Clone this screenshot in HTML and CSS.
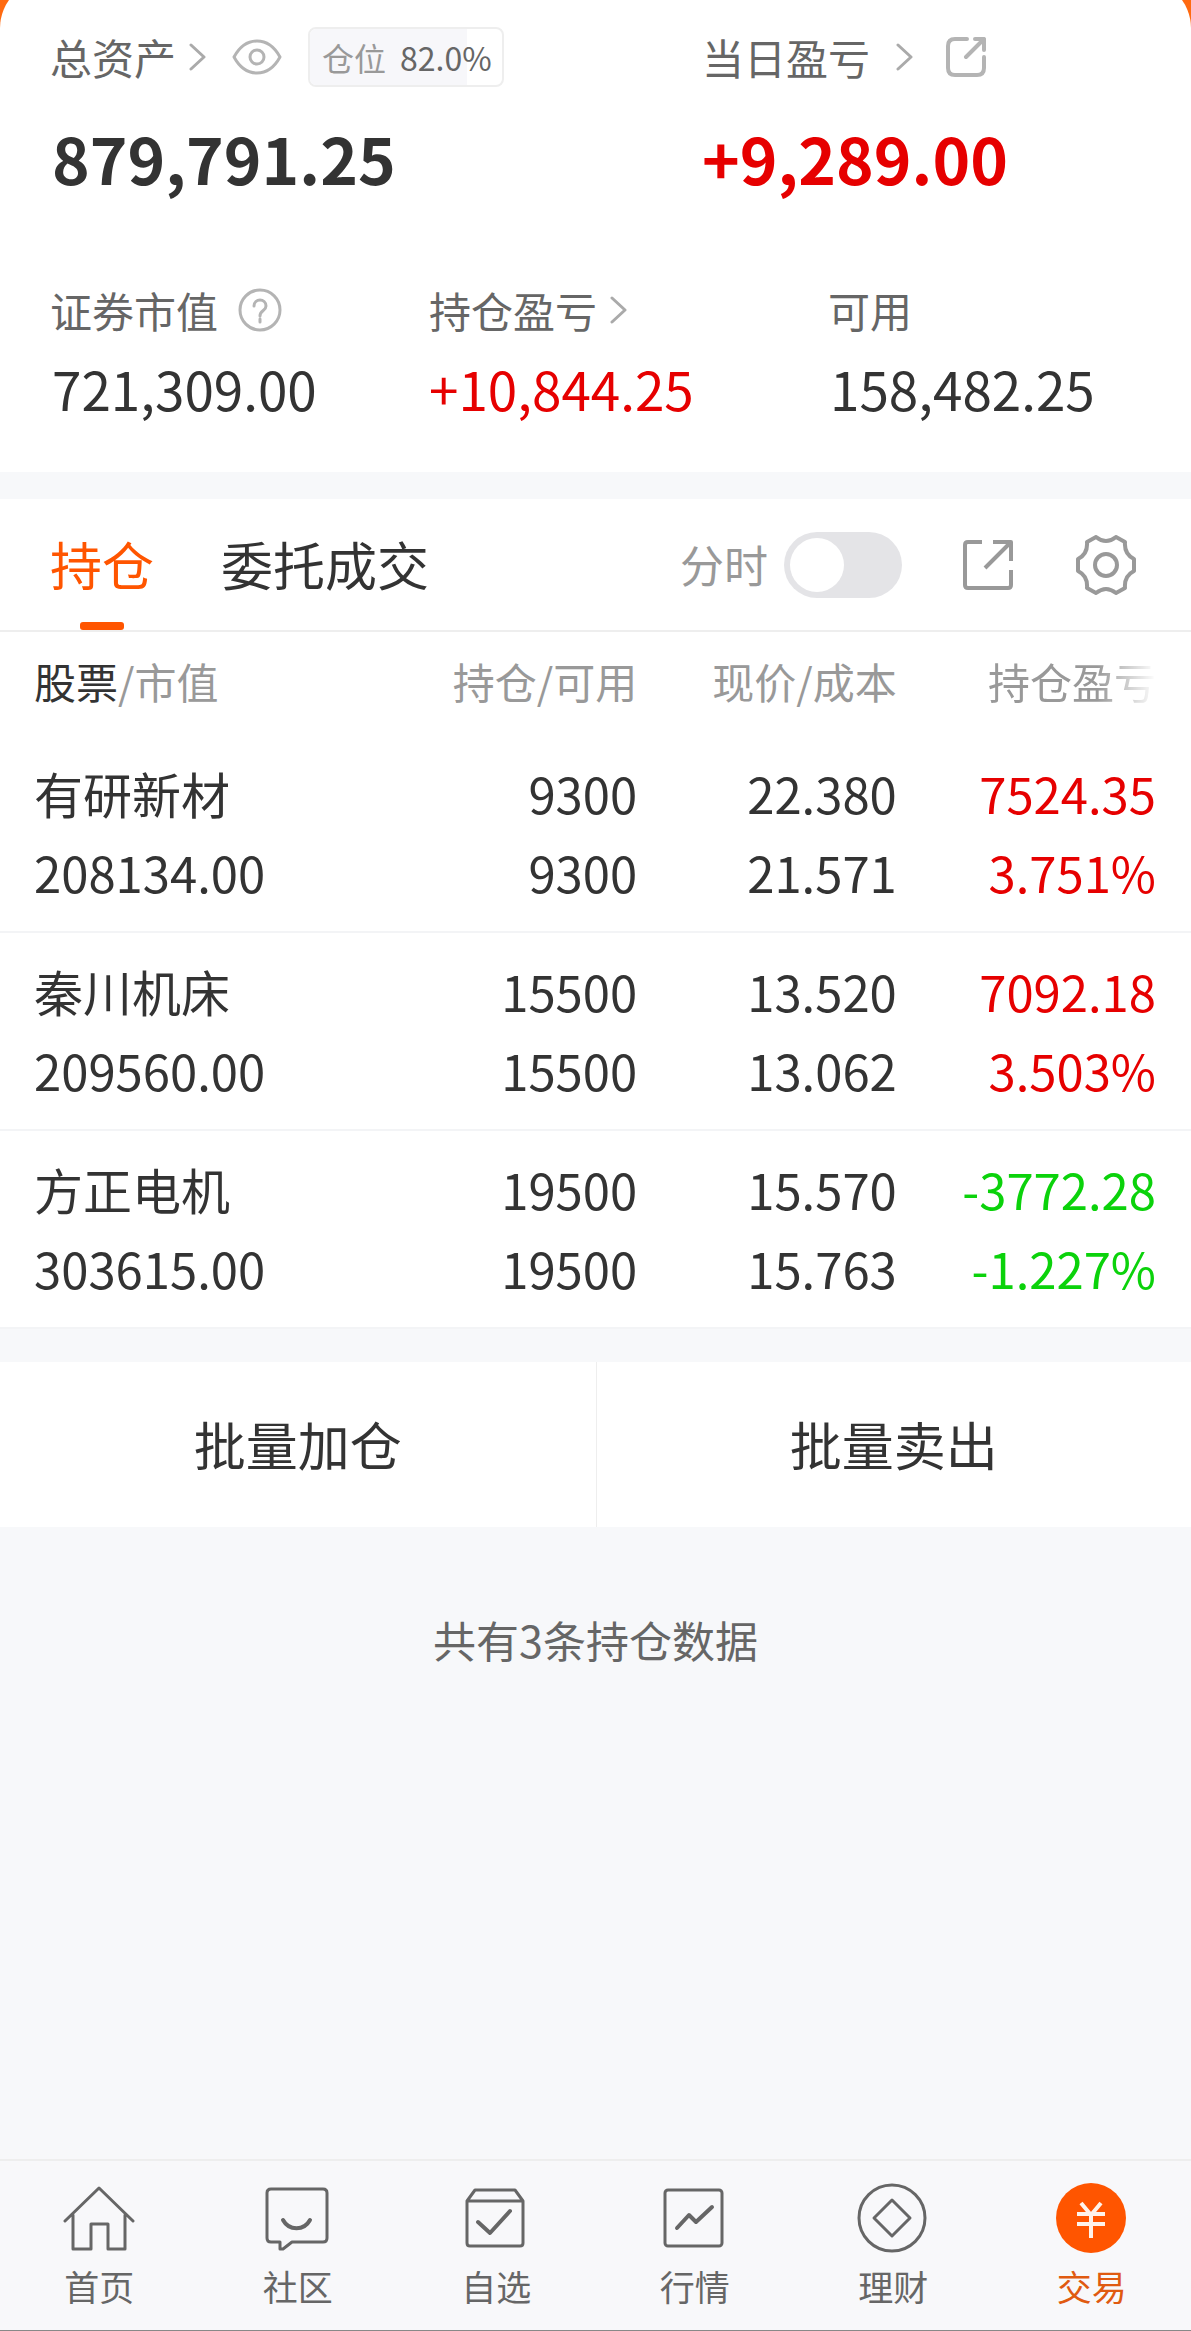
FILE: index.html
```html
<!DOCTYPE html>
<html lang="zh-CN">
<head>
  <meta charset="UTF-8" />
  <meta name="viewport" content="width=device-width, initial-scale=1.0" />
  <title>交易</title>
  <link rel="stylesheet" href="styles.css">
</head>
<body>
  <svg class="sprite" aria-hidden="true">
    <symbol id="chevron" viewBox="0 0 18 30"><path d="M2 3l13 12L2 27" /></symbol>
  </svg>

  <header class="top">
    <section class="summary">
      <div class="summary-main">
        <div>
          <div class="label-row">
            <a href="#" class="label">总资产<svg class="chevron near"><use href="#chevron" /></svg></a>
            <button class="icon-btn eye" aria-label="隐藏金额">
              <svg width="50" height="36" viewBox="0 0 50 36">
                <path d="M2 18C8 7 16 2 25 2s17 5 23 16C42 29 34 34 25 34S8 29 2 18z" />
                <circle cx="25" cy="18" r="7" />
              </svg>
            </button>
            <span class="position"><span class="position-fill" style="width: 82%"></span><span class="position-name">仓位</span><span class="position-value">82.0%</span></span>
          </div>
          <div class="amount">879,791.25</div>
        </div>
        <div>
          <div class="label-row">
            <a href="#" class="label">当日盈亏<svg class="chevron far"><use href="#chevron" /></svg></a>
            <button class="icon-btn share-small" aria-label="分享当日盈亏">
              <svg width="40" height="40" viewBox="0 0 40 40">
                <path d="M21 2H9Q2 2 2 9v22q0 7 7 7h22q7 0 7-7V20M29 2h9v11M38 2L20 20" />
              </svg>
            </button>
          </div>
          <div class="amount up">+9,289.00</div>
        </div>
      </div>
      <div class="summary-sub">
        <div>
          <div class="label-row short">
            <span class="label">证券市值</span>
            <button class="icon-btn help" aria-label="证券市值说明">
              <svg width="44" height="44" viewBox="0 0 44 44">
                <circle cx="22" cy="22" r="20" />
                <path d="M16 18c0-8 12-8 12 0 0 5-6 4-6 10M22 31v3" />
              </svg>
            </button>
          </div>
          <div class="value">721,309.00</div>
        </div>
        <div>
          <div class="label-row short">
            <a href="#" class="label">持仓盈亏<svg class="chevron near"><use href="#chevron" /></svg></a>
          </div>
          <div class="value up">+10,844.25</div>
        </div>
        <div>
          <div class="label-row short"><span class="label">可用</span></div>
          <div class="value">158,482.25</div>
        </div>
      </div>
    </section>
  </header>

  <main>
    <div class="toolbar">
      <button class="tab active">持仓</button>
      <button class="tab">委托成交</button>
      <label class="switch-label" for="minute">分时</label>
      <input type="checkbox" role="switch" class="switch" id="minute" />
      <button class="icon-btn share" aria-label="分享持仓">
        <svg width="52" height="52" viewBox="0 0 52 52">
          <path d="M20 3H6Q3 3 3 6v40q0 3 3 3h40q3 0 3-3V31M31 3h18v19M49 3L23 29" />
        </svg>
      </button>
      <button class="icon-btn" aria-label="设置">
        <svg width="60" height="60" viewBox="0 0 60 60">
          <path d="M20 2Q30 10 40 2l9 5Q48 19 58 24v12q-10 5-9 17l-9 5q-10-8-20 0l-9-5Q12 41 2 36V24Q12 19 11 7z" />
          <circle cx="30" cy="30" r="11" />
        </svg>
      </button>
    </div>

    <table class="holdings">
      <thead>
        <tr>
          <th class="col-name"><b>股票</b>/市值</th>
          <th class="col-amount">持仓/可用</th>
          <th class="col-price">现价/成本</th>
          <th class="col-profit"><span class="fade">持仓盈亏</span></th>
        </tr>
      </thead>
      <tbody>
        <tr>
          <td>有研新材<br>208134.00</td>
          <td>9300<br>9300</td>
          <td>22.380<br>21.571</td>
          <td class="up">7524.35<br>3.751%</td>
        </tr>
        <tr>
          <td>秦川机床<br>209560.00</td>
          <td>15500<br>15500</td>
          <td>13.520<br>13.062</td>
          <td class="up">7092.18<br>3.503%</td>
        </tr>
        <tr>
          <td>方正电机<br>303615.00</td>
          <td>19500<br>19500</td>
          <td>15.570<br>15.763</td>
          <td class="down">-3772.28<br>-1.227%</td>
        </tr>
      </tbody>
    </table>

    <div class="batch">
      <button>批量加仓</button>
      <button>批量卖出</button>
    </div>

    <p class="count">共有3条持仓数据</p>
  </main>

  <nav class="tabbar">
    <a href="#">
      <svg width="72" height="72" viewBox="0 0 72 72"><path d="M2 39L36 6l34 33M10 33v34h18V42h17v25h17V33" /></svg>
      首页
    </a>
    <a href="#">
      <svg width="72" height="72" viewBox="0 0 72 72">
        <path d="M9 7h52q4 0 4 4v45q0 4-4 4H30l-9 7h-3v-7H9q-4 0-4-4V11q0-4 4-4z" />
        <path class="thick" d="M21 38c6 11 21 11 27 0" />
      </svg>
      社区
    </a>
    <a href="#">
      <svg width="72" height="72" viewBox="0 0 72 72">
        <path d="M7 19v42q0 3 3 3h50q3 0 3-3V19L55 8H15zM7 19h56" />
        <path class="thick" d="M18 40l12 11 20-22" />
      </svg>
      自选
    </a>
    <a href="#">
      <svg width="72" height="72" viewBox="0 0 72 72">
        <rect x="6" y="8" width="57" height="56" rx="3" />
        <path class="thick" d="M18 46l12-13 7 7 16-15" />
      </svg>
      行情
    </a>
    <a href="#">
      <svg width="72" height="72" viewBox="0 0 72 72">
        <circle cx="35" cy="36" r="33" />
        <path d="M35 18l18 18-18 18-18-18z" />
      </svg>
      理财
    </a>
    <a href="#" class="current">
      <svg width="72" height="72" viewBox="0 0 72 72">
        <circle cx="35" cy="36" r="35" />
        <path d="M25 21l10 12 10-12M35 32v24M21 32h28M21 42h28" />
      </svg>
      交易
    </a>
  </nav>
</body>
</html>
```

FILE: styles.css
```css
* {
  box-sizing: border-box;
}
body {
  margin: 0;
  min-height: 100vh;
  display: flex;
  flex-direction: column;
  font-family: "Noto Sans CJK SC", sans-serif;
  color: #333;
  background: #f7f8fa;
  border-bottom: 1px solid #888;
}
a {
  color: inherit;
  text-decoration: none;
}
button {
  padding: 0;
  border: 0;
  background: none;
  font: inherit;
  color: inherit;
}
svg {
  display: block;
  fill: none;
  stroke: currentColor;
  stroke-linecap: round;
  stroke-linejoin: round;
}
.sprite {
  display: none;
}
.up {
  color: #e60000;
}
.down {
  color: #0bd20b;
}

/* account summary */
.top {
  overflow: hidden;
  background: #ff6a10;
}
.summary {
  margin-top: -20px;
  padding: 47px 50px 52px;
  border-radius: 48px 48px 0 0;
  background: #fff;
}
.summary-main,
.summary-sub {
  display: grid;
}
.summary-main {
  grid-template-columns: 652fr 439fr;
  margin-bottom: 88px;
}
.summary-sub {
  grid-template-columns: 379fr 399fr 313fr;
}
.label-row {
  display: flex;
  align-items: center;
  height: 60px;
}
.label-row.short {
  height: 50px;
}
.label {
  display: flex;
  align-items: center;
  font-size: 42px;
  line-height: 50px;
  color: #666;
}
.chevron {
  width: 18px;
  height: 30px;
  stroke-width: 3;
  color: #aaa;
}
.near {
  margin-left: 13px;
}
.far {
  margin-left: 26px;
}
.icon-btn {
  flex: none;
  color: #999;
}
.icon-btn svg {
  stroke-width: 4;
}
.eye,
.share-small,
.help {
  color: #b4b4b4;
}
.eye {
  margin-left: 25px;
}
.eye svg,
.help svg {
  stroke-width: 3;
}
.share-small {
  margin-left: 32px;
}
.help {
  margin-left: 20px;
}
.position {
  position: relative;
  display: flex;
  align-items: center;
  gap: 14px;
  height: 60px;
  margin-left: 26px;
  padding: 0 10px 0 12px;
  border: 2px solid #eee;
  border-radius: 8px;
  font-size: 32px;
  line-height: 40px;
  overflow: hidden;
}
.position-fill {
  position: absolute;
  top: 0;
  bottom: 0;
  left: 0;
  background: #f7f7fa;
}
.position-name,
.position-value {
  position: relative;
  color: #999;
}
.position-value {
  color: #666;
}
.amount {
  margin-top: 30px;
  padding-left: 2px;
  font-size: 64px;
  font-weight: 700;
  line-height: 80px;
}
.amount.up,
.value.up {
  padding-left: 0;
}
.value {
  margin-top: 21px;
  padding-left: 2px;
  font-size: 53px;
  line-height: 64px;
}

/* tabs and tools */
main {
  flex: 1;
}
.toolbar {
  display: flex;
  align-items: center;
  height: 133px;
  margin-top: 27px;
  padding: 0 55px 0 50px;
  border-bottom: 2px solid #eee;
  background: #fff;
}
.tab {
  position: relative;
  height: 131px;
  margin-right: 67px;
  padding-bottom: 3px;
  font-size: 52px;
}
.tab.active {
  color: #ff5500;
}
.tab.active::after {
  content: "";
  position: absolute;
  bottom: 0;
  left: 50%;
  width: 44px;
  height: 8px;
  margin-left: -22px;
  border-radius: 3px;
  background: #ff5500;
}
.switch-label {
  margin-left: auto;
  padding-bottom: 2px;
  font-size: 44px;
  line-height: 60px;
  color: #999;
}
.switch {
  appearance: none;
  width: 118px;
  height: 66px;
  margin: 0 60px 0 16px;
  padding: 6px;
  border-radius: 33px;
  background: #e4e4e7;
}
.switch::before {
  content: "";
  display: block;
  width: 54px;
  height: 54px;
  border-radius: 50%;
  background: #fff;
}
.switch:checked {
  background: #ff5500;
}
.switch:checked::before {
  margin-left: auto;
}
.share {
  margin-right: 62px;
}
.share svg {
  stroke-linecap: butt;
}

/* holdings table */
.holdings {
  width: 100%;
  table-layout: fixed;
  border-collapse: collapse;
  background: #fff;
}
.holdings th {
  height: 103px;
  padding: 0 0 5px;
  font-size: 42px;
  font-weight: 400;
  line-height: 60px;
  text-align: right;
  color: #999;
}
.holdings th b {
  font-weight: 400;
  color: #333;
}
.holdings td {
  padding: 18px 0 20px;
  border-bottom: 2px solid #f3f4f6;
  font-size: 49px;
  line-height: 79px;
  text-align: right;
}
.holdings th:first-child,
.holdings td:first-child {
  padding-left: 34px;
  text-align: left;
}
.holdings th:last-child,
.holdings td:last-child {
  padding-right: 35px;
}
.col-name {
  width: 30%;
}
.col-amount {
  width: 23.5%;
}
.col-price {
  width: 21.8%;
}
.fade {
  -webkit-mask-image: linear-gradient(to right, #000 65%, transparent);
  mask-image: linear-gradient(to right, #000 65%, transparent);
}

/* batch actions */
.batch {
  display: grid;
  grid-template-columns: 1fr 1fr;
  margin-top: 33px;
  background: #fff;
}
.batch button {
  height: 165px;
  padding-bottom: 3px;
  font-size: 52px;
}
.batch button + button {
  border-left: 1px solid #eee;
}
.count {
  margin: 82px 0 0;
  font-size: 43px;
  line-height: 60px;
  text-align: center;
  color: #666;
}

/* bottom navigation */
.tabbar {
  display: grid;
  grid-template-columns: repeat(6, 1fr);
  padding: 21px 0 19px;
  border-top: 2px solid #eee;
  background: #f8f8fa;
}
.tabbar a {
  display: flex;
  flex-direction: column;
  align-items: center;
  gap: 7px;
  font-size: 35px;
  line-height: 50px;
  color: #666;
}
.tabbar svg {
  stroke-width: 3;
}
.tabbar .thick {
  stroke-width: 4;
}
.tabbar .current {
  color: #e05a10;
}
.current circle {
  fill: #ff5500;
  stroke: none;
}
.current path {
  stroke: #fff3ea;
  stroke-width: 4;
  stroke-linecap: butt;
}
```
